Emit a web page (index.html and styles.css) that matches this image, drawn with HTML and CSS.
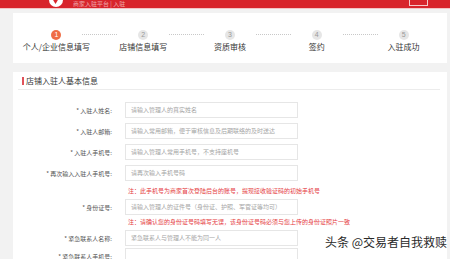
FILE: index.html
```html
<!DOCTYPE html>
<html lang="zh">
<head>
<meta charset="utf-8">
<link rel="stylesheet" href="styles.css">
</head>
<body>
<header class="topbar">
  <div class="logo"><span class="logo-mark"></span></div>
  <div class="brand">商家入驻平台 | 入驻</div>
  <div class="spacer"></div>
  <div class="top-icon"></div>
</header>
<div class="topline"></div>
<main class="page">
  <section class="steps">
    <div class="step active"><span class="num">1</span><span class="label">个人/企业信息填写</span></div>
    <div class="step"><span class="num">2</span><span class="label">店铺信息填写</span></div>
    <div class="step"><span class="num">3</span><span class="label">资质审核</span></div>
    <div class="step"><span class="num">4</span><span class="label">签约</span></div>
    <div class="step last"><span class="num">5</span><span class="label">入驻成功</span></div>
  </section>
  <section class="card">
    <h2 class="title">店铺入驻人基本信息</h2>
    <div class="form">
      <div class="row"><label class="lbl">* 入驻人姓名:</label><div class="input">请输入管理人的真实姓名</div></div>
      <div class="row"><label class="lbl">* 入驻人邮箱:</label><div class="input">请输入常用邮箱，便于审核信息及后期联络的及时送达</div></div>
      <div class="row"><label class="lbl">* 入驻人手机号:</label><div class="input">请输入管理人常用手机号，不支持座机号</div></div>
      <div class="row"><label class="lbl">* 再次输入入驻人手机号:</label><div class="input">请再次输入手机号码</div></div>
      <p class="note">注：此手机号为商家首次登陆后台的账号，提现接收验证码的初始手机号</p>
      <div class="row tight"><label class="lbl">* 身份证号:</label><div class="input plain">请输入管理人的证件号（身份证、护照、军官证等均可）</div></div>
      <p class="note">注：请确认您的身份证号码填写无误，该身份证号码必须与您上传的身份证照片一致</p>
      <div class="row tight"><label class="lbl">* 紧急联系人名称:</label><div class="input plain">紧急联系人与管理人不能为同一人</div></div>
      <div class="row tight"><label class="lbl">* 紧急联系人手机号:</label><div class="input plain"></div></div>
    </div>
  </section>
</main>
<div class="watermark">头条 @交易者自我救赎</div>
</body>
</html>
```
FILE: styles.css
```css
* { box-sizing: border-box; margin: 0; padding: 0; }
html, body { width: 450px; height: 259px; overflow: hidden; }
body {
  background: #f2f2f2;
  font-family: "Noto Sans CJK SC", "Noto Sans", sans-serif;
  color: #333;
  position: relative;
}
.topbar {
  height: 8px;
  background: #d8242b;
  display: flex;
  align-items: flex-end;
  overflow: hidden;
  padding: 0 22px 0 48px;
}
.logo {
  width: 15px; height: 22px;
  flex: none;
  display: flex; align-items: flex-end; justify-content: center;
}
.logo-mark {
  width: 14px; height: 14px; border-radius: 50%;
  background: #fff;
  margin-bottom: 1px;
  position: relative;
}
.logo-mark::after {
  content: ""; position: absolute; left: 4px; top: 6px;
  width: 6px; height: 5px; background: #d8242b;
  clip-path: polygon(0 0, 100% 0, 50% 100%);
}
.brand {
  margin-left: 10px;
  font-size: 6px; line-height: 8px;
  color: rgba(255,255,255,0.6);
  white-space: nowrap;
  align-self: center;
}
.spacer { flex: 1; }
.top-icon {
  width: 19px; height: 14px;
  border: 1px solid rgba(255,255,255,0.75);
  margin-bottom: 2px;
}
.topline { height: 1px; background: #f3c4c5; }
.page { padding: 4px 3px 0 13px; }
.steps {
  background: #fff;
  height: 50px;
  display: grid;
  grid-template-columns: repeat(5, 1fr);
  padding-top: 17px;
}
.step {
  position: relative;
  display: flex; flex-direction: column; align-items: center;
}
.step::after {
  content: ""; position: absolute;
  left: calc(50% + 26px); top: 4px;
  width: 35px; height: 0;
  border-top: 1px dotted #c8c8c8;
}
.step.last::after { display: none; }
.num {
  width: 10px; height: 10px; border-radius: 50%;
  background: #e6e6e6; color: #999;
  font-size: 7px; line-height: 10px; text-align: center;
  font-family: "Liberation Sans", sans-serif;
}
.step.active .num { background: #ef6d46; color: #fff; }
.label {
  margin-top: 2px;
  font-size: 8px; line-height: 10px; color: #333;
  white-space: nowrap;
}
.card {
  background: #fff;
  margin-top: 9px;
  height: 187px;
  padding-top: 4px;
}
.title {
  font-size: 8px; line-height: 10px; font-weight: normal; color: #333;
  margin: 0 7px 0 5px;
  padding: 0 0 3px 8px;
  border-bottom: 1px solid #ececec;
  position: relative;
}
.title::before {
  content: ""; position: absolute; left: 4px; top: 1px;
  width: 2px; height: 8px; background: #e0525a;
}
.form { padding-top: 12px; }
.row {
  display: flex; align-items: center;
  height: 16px; margin-bottom: 5px;
}
.row.tight { margin-bottom: 2px; }
.lbl {
  width: 99px; flex: none;
  text-align: right;
  font-size: 6px; color: #555;
  white-space: nowrap;
}
.input {
  margin-left: 13px;
  width: 173px; height: 16px;
  border: 1px solid #e6e6e6;
  font-size: 6px; line-height: 14px; color: #a5a5a5;
  padding-left: 5px;
  white-space: nowrap; overflow: hidden;
}
.note {
  margin: 1px 0 3px 115px;
  font-size: 6px; line-height: 10px; color: #e53c3f;
  white-space: nowrap;
}
.watermark {
  position: absolute; left: 325px; top: 234px;
  font-size: 12px; line-height: 16px; color: #2a2a2a;
  white-space: nowrap;
  text-shadow: 0 0 2px #fff;
}
```
